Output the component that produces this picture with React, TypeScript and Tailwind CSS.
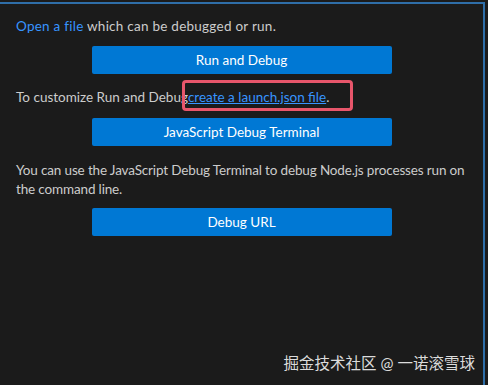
import React from "react";

const font = { fontFamily: 'Lato, "Noto Sans", "Noto Sans CJK SC", sans-serif' };

function ActionButton({ label }: { label: string }) {
  return (
    <div className="flex justify-center pr-[8px]">
      <button className="h-[28px] w-[300px] rounded-[2px] bg-[#0078d4] text-[13.5px] text-white">
        {label}
      </button>
    </div>
  );
}

export default function App() {
  return (
    <div className="h-[385px] w-[488px] bg-[#1b1b1b] pt-[2px]" style={font}>
      <div className="relative h-[383px] w-[485px] border-t-2 border-r-2 border-[#2f6ea8] pl-[16px] pr-[8px] text-[13.5px] leading-[19px] text-[#cccccc]">
        <p className="mt-[13px] tracking-[0.25px]">
          <span className="text-[#3794ff]">Open a file</span> which can be debugged or run.
        </p>
        <div className="mt-[10px]">
          <ActionButton label="Run and Debug" />
        </div>
        <p className="mt-[14px]">
          To customize Run and Debug
          <span className="relative">
            <span className="text-[#3794ff] underline">create a launch.json file</span>.
            <span className="absolute -left-[6px] -top-[9px] h-[31px] w-[171px] rounded-[4px] border-[3px] border-[#e8566b]" />
          </span>
        </p>
        <div className="mt-[11px]">
          <ActionButton label="JavaScript Debug Terminal" />
        </div>
        <p className="mt-[15px] tracking-[-0.15px]">
          You can use the JavaScript Debug Terminal to debug Node.js processes run on the command line.
        </p>
        <div className="mt-[9px]">
          <ActionButton label="Debug URL" />
        </div>
        <div className="absolute bottom-[12px] right-[8px] text-[15.5px] text-[#dcdcdc]">
          掘金技术社区 @ 一诺滚雪球
        </div>
      </div>
    </div>
  );
}
